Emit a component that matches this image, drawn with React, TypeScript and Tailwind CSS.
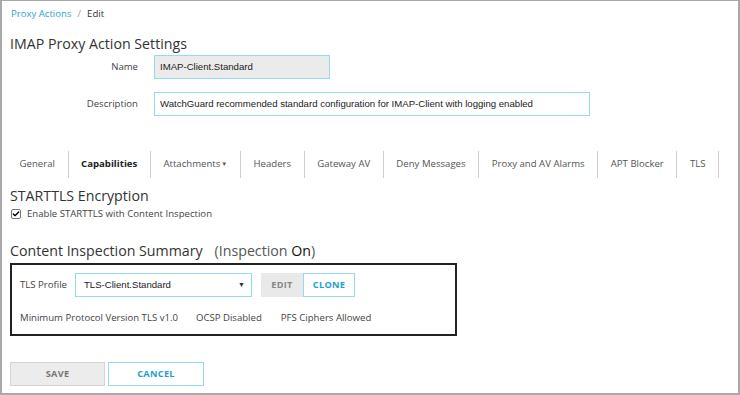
import { Check } from 'lucide-react';

const tabs = [
  'General',
  'Capabilities',
  'Attachments',
  'Headers',
  'Gateway AV',
  'Deny Messages',
  'Proxy and AV Alarms',
  'APT Blocker',
  'TLS',
];

export default function App() {
  return (
    <div className="w-[740px] h-[395px] bg-white border-2 border-t border-[#a9a9a9] text-[#333] font-['Open_Sans',sans-serif] overflow-hidden">
      {/* breadcrumb */}
      <div className="pl-[9px] pt-[6px] text-[9.6px] leading-[14px]">
        <span className="text-[#2ea3d4]">Proxy Actions</span>
        <span className="text-[#999] mx-[6px]">/</span>
        <span className="text-[#333]">Edit</span>
      </div>

      <h1 className="pl-[8px] mt-[14px] text-[14.2px] leading-[18px] text-[#333]">IMAP Proxy Action Settings</h1>

      {/* form rows */}
      <div className="mt-[2px] flex items-center">
        <label className="w-[136px] text-right text-[9.6px] text-[#444]">Name</label>
        <div className="ml-[16px] w-[176px] h-[24px] bg-[#ebebeb] border border-[#93dce9] flex items-center px-[5px] font-['Liberation_Sans',Arial,sans-serif] text-[9.6px] text-[#222]">
          IMAP-Client.Standard
        </div>
      </div>
      <div className="mt-[13px] flex items-center">
        <label className="w-[136px] text-right text-[9.6px] text-[#444]">Description</label>
        <div className="ml-[16px] w-[436px] h-[24px] bg-white border border-[#93dce9] flex items-center px-[5px] font-['Liberation_Sans',Arial,sans-serif] text-[9.6px] text-[#222]">
          WatchGuard recommended standard configuration for IMAP-Client with logging enabled
        </div>
      </div>

      {/* tabs */}
      <div className="mt-[35px] pl-[5px] flex items-center h-[27px]">
        {tabs.map((t) => (
          <div
            key={t}
            className={`h-full px-[12.6px] flex items-center border-r border-[#cfcfcf] text-[9.6px] ${
              t === 'Capabilities' ? 'font-bold text-[#222]' : 'text-[#555]'
            }`}
          >
            {t}
            {t === 'Attachments' && <span className="ml-[1px] text-[6px]">▼</span>}
          </div>
        ))}
      </div>

      <h2 className="pl-[8px] mt-[9px] text-[14.2px] leading-[18px] text-[#333]">STARTTLS Encryption</h2>
      <div className="pl-[9px] mt-[2px] flex items-center gap-[6px] text-[9.6px] leading-[14px] text-[#444]">
        <div className="w-[10px] h-[10px] border border-[#777] rounded-[2px] bg-white flex items-center justify-center">
          <Check className="w-[8px] h-[8px] text-black" strokeWidth={4} />
        </div>
        Enable STARTTLS with Content Inspection
      </div>

      <h2 className="pl-[8px] mt-[21px] text-[14.2px] leading-[18px] text-[#333]">
        Content Inspection Summary
        <span className="ml-[12px] text-[#555]">(Inspection </span>
        <span className="text-[#111]">On</span>
        <span className="text-[#555]">)</span>
      </h2>

      {/* summary box */}
      <div className="ml-[8px] mt-[3px] w-[447px] h-[73px] border-2 border-[#222] px-[8px] pt-[8px]">
        <div className="flex items-center">
          <span className="text-[9.6px] text-[#444] w-[55px]">TLS Profile</span>
          <div className="w-[177px] h-[24px] border border-[#93dce9] flex items-center justify-between pl-[8px] pr-[6px] font-['Liberation_Sans',Arial,sans-serif] text-[9.6px] text-[#222]">
            TLS-Client.Standard
            <span className="text-[7px] text-[#333]">▼</span>
          </div>
          <div className="ml-[9px] flex h-[24px]">
            <div className="w-[42px] flex items-center justify-center bg-[#e9e9e9] text-[9.2px] font-bold text-[#888] tracking-[0.3px]">EDIT</div>
            <div className="w-[52px] flex items-center justify-center border border-[#93dce9] bg-white text-[9.2px] font-bold text-[#1e9fcc] tracking-[0.3px]">CLONE</div>
          </div>
        </div>
        <div className="mt-[14px] flex text-[9.6px] text-[#444]">
          <span>Minimum Protocol Version TLS v1.0</span>
          <span className="ml-[18px]">OCSP Disabled</span>
          <span className="ml-[19px]">PFS Ciphers Allowed</span>
        </div>
      </div>

      {/* buttons */}
      <div className="ml-[8px] mt-[26px] flex gap-[3px]">
        <button className="w-[95px] h-[24px] bg-[#ececec] border border-[#d5d5d5] text-[9.2px] font-bold text-[#777] tracking-[0.3px]">SAVE</button>
        <button className="w-[96px] h-[24px] bg-white border border-[#93dce9] text-[9.2px] font-bold text-[#1e9fcc] tracking-[0.3px]">CANCEL</button>
      </div>
    </div>
  );
}
